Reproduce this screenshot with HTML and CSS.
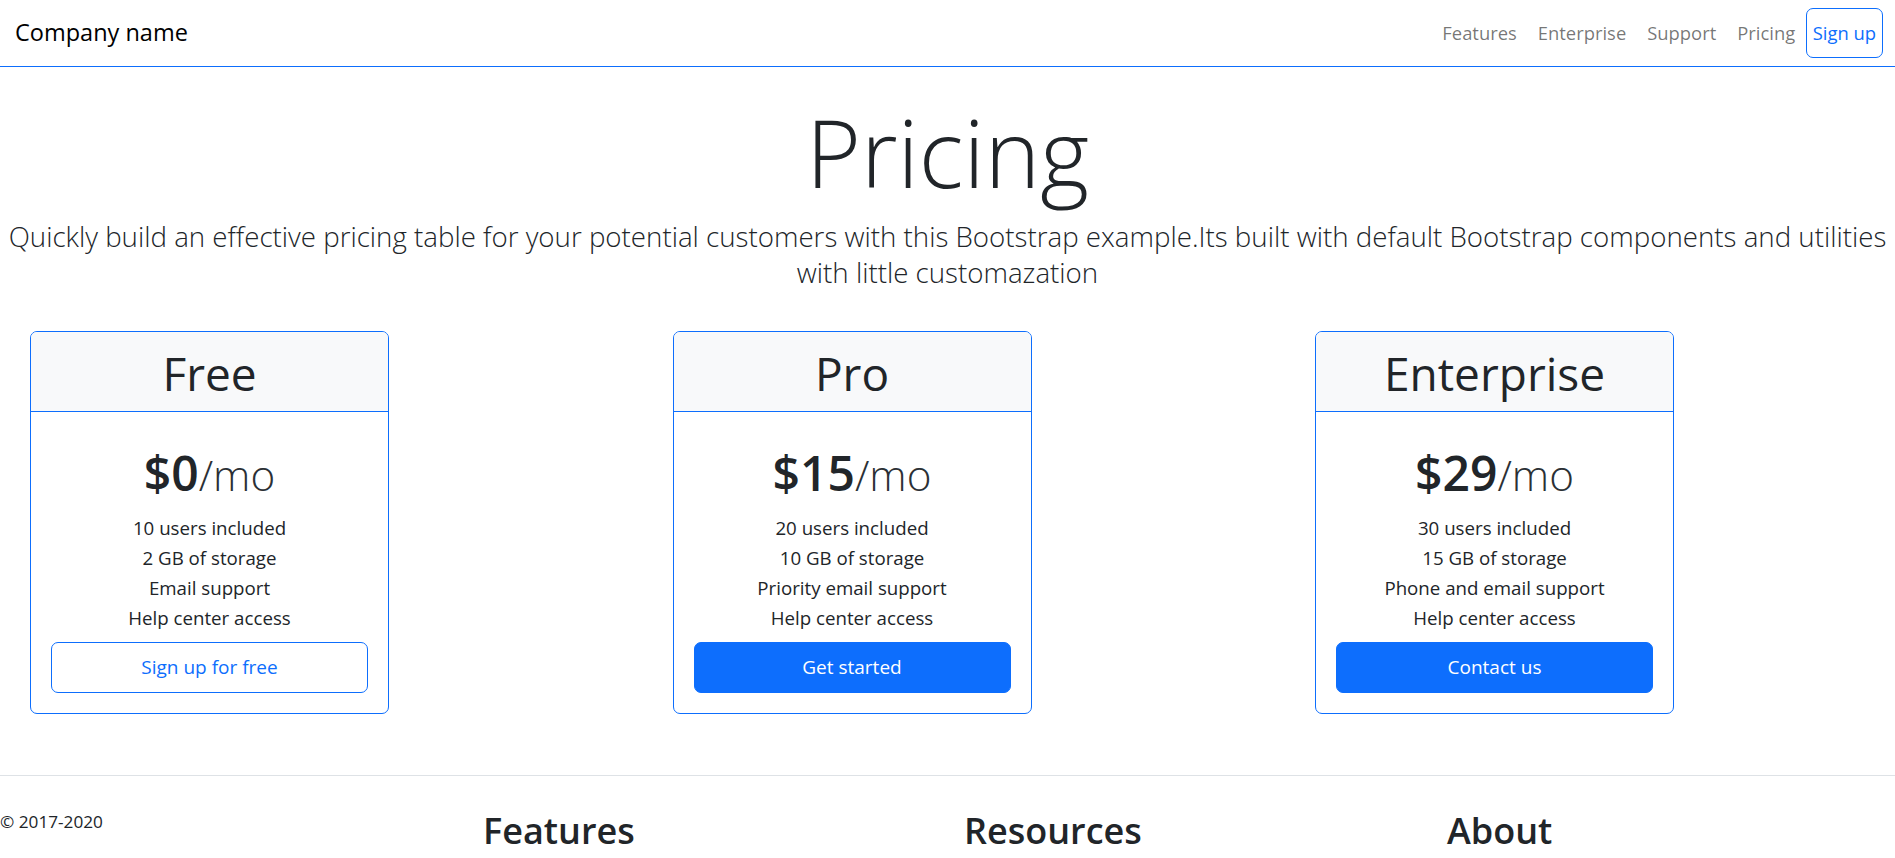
FILE: index.html
```html
<!DOCTYPE html>
<html lang="en">
<head>
<meta charset="utf-8">
<title>Pricing example</title>
<link rel="stylesheet" href="styles.css">
</head>
<body>
<header class="topbar">
  <span class="brand">Company name</span>
  <nav class="menu">
    <a class="menu-link" href="#">Features</a>
    <a class="menu-link" href="#">Enterprise</a>
    <a class="menu-link" href="#">Support</a>
    <a class="menu-link" href="#">Pricing</a>
    <a class="menu-btn" href="#">Sign up</a>
  </nav>
</header>

<section class="hero">
  <h1 class="hero-title">Pricing</h1>
  <p class="hero-lead">Quickly build an effective pricing table for your potential customers with this Bootstrap example.Its built with default Bootstrap components and utilities with little customazation</p>
</section>

<main class="plans">
  <div class="plan">
    <div class="plan-head"><h2 class="plan-name">Free</h2></div>
    <div class="plan-body">
      <div class="price">$0<small class="per">/mo</small></div>
      <ul class="perks">
        <li>10 users included</li>
        <li>2 GB of storage</li>
        <li>Email support</li>
        <li>Help center access</li>
      </ul>
      <button class="btn btn-outline" type="button">Sign up for free</button>
    </div>
  </div>
  <div class="plan">
    <div class="plan-head"><h2 class="plan-name">Pro</h2></div>
    <div class="plan-body">
      <div class="price">$15<small class="per">/mo</small></div>
      <ul class="perks">
        <li>20 users included</li>
        <li>10 GB of storage</li>
        <li>Priority email support</li>
        <li>Help center access</li>
      </ul>
      <button class="btn btn-solid" type="button">Get started</button>
    </div>
  </div>
  <div class="plan">
    <div class="plan-head"><h2 class="plan-name">Enterprise</h2></div>
    <div class="plan-body">
      <div class="price">$29<small class="per">/mo</small></div>
      <ul class="perks">
        <li>30 users included</li>
        <li>15 GB of storage</li>
        <li>Phone and email support</li>
        <li>Help center access</li>
      </ul>
      <button class="btn btn-solid" type="button">Contact us</button>
    </div>
  </div>
</main>

<footer class="foot">
  <div class="foot-col foot-copy"><small>© 2017-2020</small></div>
  <div class="foot-col"><h3 class="foot-title">Features</h3></div>
  <div class="foot-col"><h3 class="foot-title">Resources</h3></div>
  <div class="foot-col"><h3 class="foot-title">About</h3></div>
</footer>
</body>
</html>
```

FILE: styles.css
```css
* { box-sizing: border-box; }
html, body { margin: 0; padding: 0; }
body {
  font-family: "Open Sans", "Noto Sans", sans-serif;
  font-size: 19.2px;
  line-height: 1.5;
  color: #212529;
  background: #fff;
  overflow: hidden;
}
h1, h2, h3, p, ul { margin: 0; padding: 0; }

.topbar {
  display: flex;
  align-items: center;
  justify-content: space-between;
  height: 67px;
  padding: 0 12px 0 15px;
  border-bottom: 1px solid #0d6efd;
}
.brand { font-size: 23.5px; color: #000; }
.menu { display: flex; align-items: center; }
.menu-link {
  color: rgba(0,0,0,.55);
  text-decoration: none;
  padding: 0 10.5px;
  font-size: 18.4px;
}
.menu-btn {
  color: #0d6efd;
  text-decoration: none;
  font-size: 18.4px;
  border: 1px solid #0d6efd;
  border-radius: 7px;
  padding: 0 6px;
  height: 50px;
  display: flex;
  align-items: center;
}

.hero { text-align: center; padding-top: 29px; }
.hero-title {
  font-size: 94px;
  font-weight: 300;
  line-height: 1.2;
}
.hero-lead {
  margin-top: 9px;
  font-size: 27.7px;
  font-weight: 300;
  line-height: 36px;
}

.plans {
  display: flex;
  gap: 283.5px;
  padding: 41px 0 0 30px;
}
.plan {
  width: 359px;
  border: 1px solid #0d6efd;
  border-radius: 7px;
  overflow: hidden;
}
.plan-head {
  background: #f8f9fa;
  border-bottom: 1px solid #0d6efd;
  text-align: center;
  padding: 14.5px 0 9.5px;
}
.plan-name { font-size: 46px; font-weight: 400; line-height: 1.2; }
.plan-body { padding: 32.5px 20px 20px; text-align: center; }
.price { font-size: 48px; font-weight: 600; line-height: 1.2; }
.per { font-size: 0.88em; font-weight: 300; color: #2b3035; }
.perks { list-style: none; margin: 10.5px 0 9.3px; line-height: 30px; font-size: 18.7px; }
.btn {
  display: block;
  width: 100%;
  height: 51px;
  border-radius: 7px;
  font-family: inherit;
  font-size: 19px;
  cursor: pointer;
}
.btn-outline { background: #fff; color: #0d6efd; border: 1px solid #0d6efd; }
.btn-solid { background: #0d6efd; color: #fff; border: 1px solid #0d6efd; }

.foot {
  display: grid;
  grid-template-columns: 483px 481px 483px 1fr;
  margin-top: 61px;
  padding-top: 33.4px;
  border-top: 1px solid #dee2e6;
}
.foot-copy small { font-size: 17.2px; display: block; line-height: 20px; margin-top: 2.9px; }
.foot-title { font-size: 36px; font-weight: 600; line-height: 1.2; }
```
